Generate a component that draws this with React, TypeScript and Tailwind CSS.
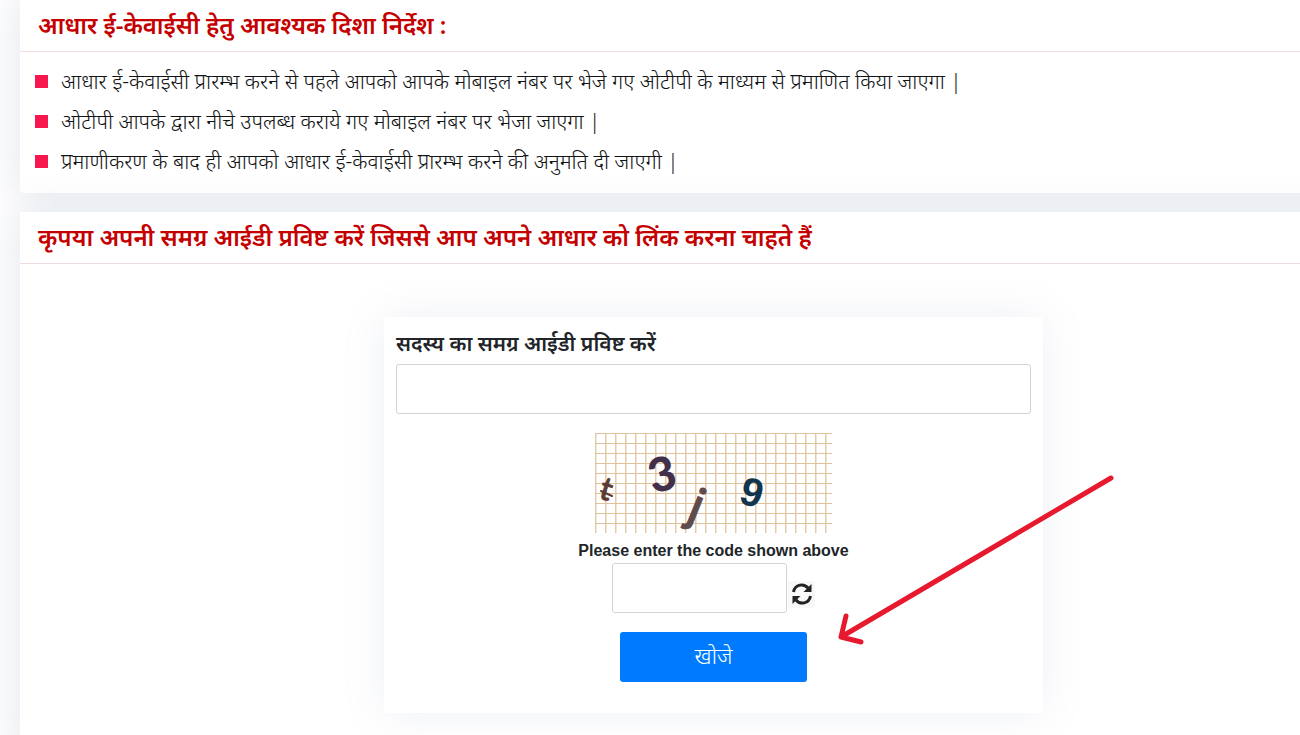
import type { ReactNode } from 'react';

const instructions = [
  'आधार ई-केवाईसी प्रारम्भ करने से पहले आपको आपके मोबाइल नंबर पर भेजे गए ओटीपी के माध्यम से प्रमाणित किया जाएगा |',
  'ओटीपी आपके द्वारा नीचे उपलब्ध कराये गए मोबाइल नंबर पर भेजा जाएगा |',
  'प्रमाणीकरण के बाद ही आपको आधार ई-केवाईसी प्रारम्भ करने की अनुमति दी जाएगी |',
];

const Panel = ({ title, children }: { title: string; children: ReactNode }) => (
  <section className="rounded-b bg-white shadow-[0_0_35px_rgba(132,150,168,0.22)]">
    <h2 className="h-[52px] border-b border-[#f0dcdc] pl-[18px] text-[24px] leading-[50px] font-semibold text-[#c40000]">
      {title}
    </h2>
    {children}
  </section>
);

const Captcha = () => (
  <svg width="237" height="100" viewBox="0 0 237 100" role="img" aria-label="captcha">
    <defs>
      <pattern id="grid" width="10" height="10" patternUnits="userSpaceOnUse">
        <rect width="10" height="10" fill="#fff" />
        <rect width="1" height="10" fill="#e3cba8" />
        <rect x="1" width="1" height="10" fill="#f1e6d6" />
        <rect width="10" height="1" fill="#e0c39c" />
      </pattern>
    </defs>
    <rect width="237" height="100" fill="url(#grid)" />
    <text x="5" y="67" fontFamily="Lato, sans-serif" fontSize="32" fill="#5a3a32" stroke="#5a3a32" transform="rotate(17 11 58)">t</text>
    <path d="M6 58 L17 63" stroke="#5a3a32" strokeWidth="2" strokeLinecap="round" />
    <text x="53" y="58" fontFamily="Lato, sans-serif" fontSize="47" fontWeight="900" fill="#42304a" transform="rotate(-14 67 40)">3</text>
    <text x="95" y="90" fontFamily="Inter, sans-serif" fontSize="47" fontWeight="500" fill="#5f4a4c" stroke="#5f4a4c" strokeLinejoin="round" transform="rotate(22 103 76)">j</text>
    <text x="146" y="73" fontFamily="'Liberation Sans', sans-serif" fontSize="40" fontWeight="700" fill="#12344c" transform="rotate(16 157 59)">9</text>
  </svg>
);

const RefreshIcon = () => (
  <svg width="20" height="22" viewBox="0 0 20 22">
    <path d="M1.500 9 C3 1 12 0 16 5" fill="none" stroke="#222" strokeWidth="3" />
    <path d="M19.500 1 V9 H11.500 Z" fill="#222" />
    <path d="M18.500 13 C17 21 8 22 4 17" fill="none" stroke="#222" strokeWidth="3" />
    <path d="M.5 21 V13 H8.500 Z" fill="#222" />
  </svg>
);

const PointerArrow = () => (
  <svg
    className="pointer-events-none absolute top-[155px] left-[450px]"
    width="284"
    height="176"
    fill="none"
    stroke="#e6192e"
    strokeWidth="5"
    strokeLinecap="round"
    strokeLinejoin="round"
  >
    <path d="M277 6 L7 165 M12 144 L7 165 L27 170" />
  </svg>
);

export default function App() {
  return (
    <div className="min-h-screen overflow-hidden bg-[#fdfdfe] pl-5 font-['Noto_Sans',sans-serif] text-[#212529]">
      {/* the panels run past the right edge of the window */}
      <main className="-mr-[107px] flex flex-col gap-[19px]">
        <Panel title="आधार ई-केवाईसी हेतु आवश्यक दिशा निर्देश :">
          <ul className="px-[15px] pt-[9px] pb-3 text-[21px] font-light text-[#111315]">
            {instructions.map((text) => (
              <li key={text} className="flex h-10 items-center gap-[13px] leading-10">
                <span className="size-[13px] bg-[#f6174f]" />
                {text}
              </li>
            ))}
          </ul>
        </Panel>

        <Panel title="कृपया अपनी समग्र आईडी प्रविष्ट करें जिससे आप अपने आधार को लिंक करना चाहते हैं">
          <div className="flex justify-center pt-[53px] pb-10">
            <form
              className="relative flex w-full max-w-[659px] flex-col items-center bg-white p-3 pb-[31px] shadow-[0_0_40px_rgba(132,150,185,0.14)]"
              onSubmit={(e) => e.preventDefault()}
            >
              <label htmlFor="samagra" className="h-[35px] self-start text-[21px] leading-[28px] font-semibold">
                सदस्य का समग्र आईडी प्रविष्ट करें
              </label>
              <input id="samagra" type="text" className="h-[50px] w-full rounded-[3px] border border-[#ced4da] bg-white px-3 text-xl" />
              <div className="mt-[19px] mb-1.5">
                <Captcha />
              </div>
              <label htmlFor="code" className="font-['Liberation_Sans',sans-serif] text-base leading-6 font-bold">
                Please enter the code shown above
              </label>
              <div className="flex items-center gap-px">
                <input id="code" type="text" className="h-[50px] w-[175px] rounded-[3px] border border-[#ced4da] bg-white px-3 text-xl" />
                <button type="button" aria-label="Refresh" className="mt-3 flex size-[27px] items-center justify-center bg-[#f8f8f8]">
                  <RefreshIcon />
                </button>
              </div>
              <button type="submit" className="mt-[19px] h-[50px] w-[187px] rounded-[3px] bg-[#007bff] pb-1 text-[22px] font-light text-white">
                खोजे
              </button>
              <PointerArrow />
            </form>
          </div>
        </Panel>
      </main>
    </div>
  );
}
